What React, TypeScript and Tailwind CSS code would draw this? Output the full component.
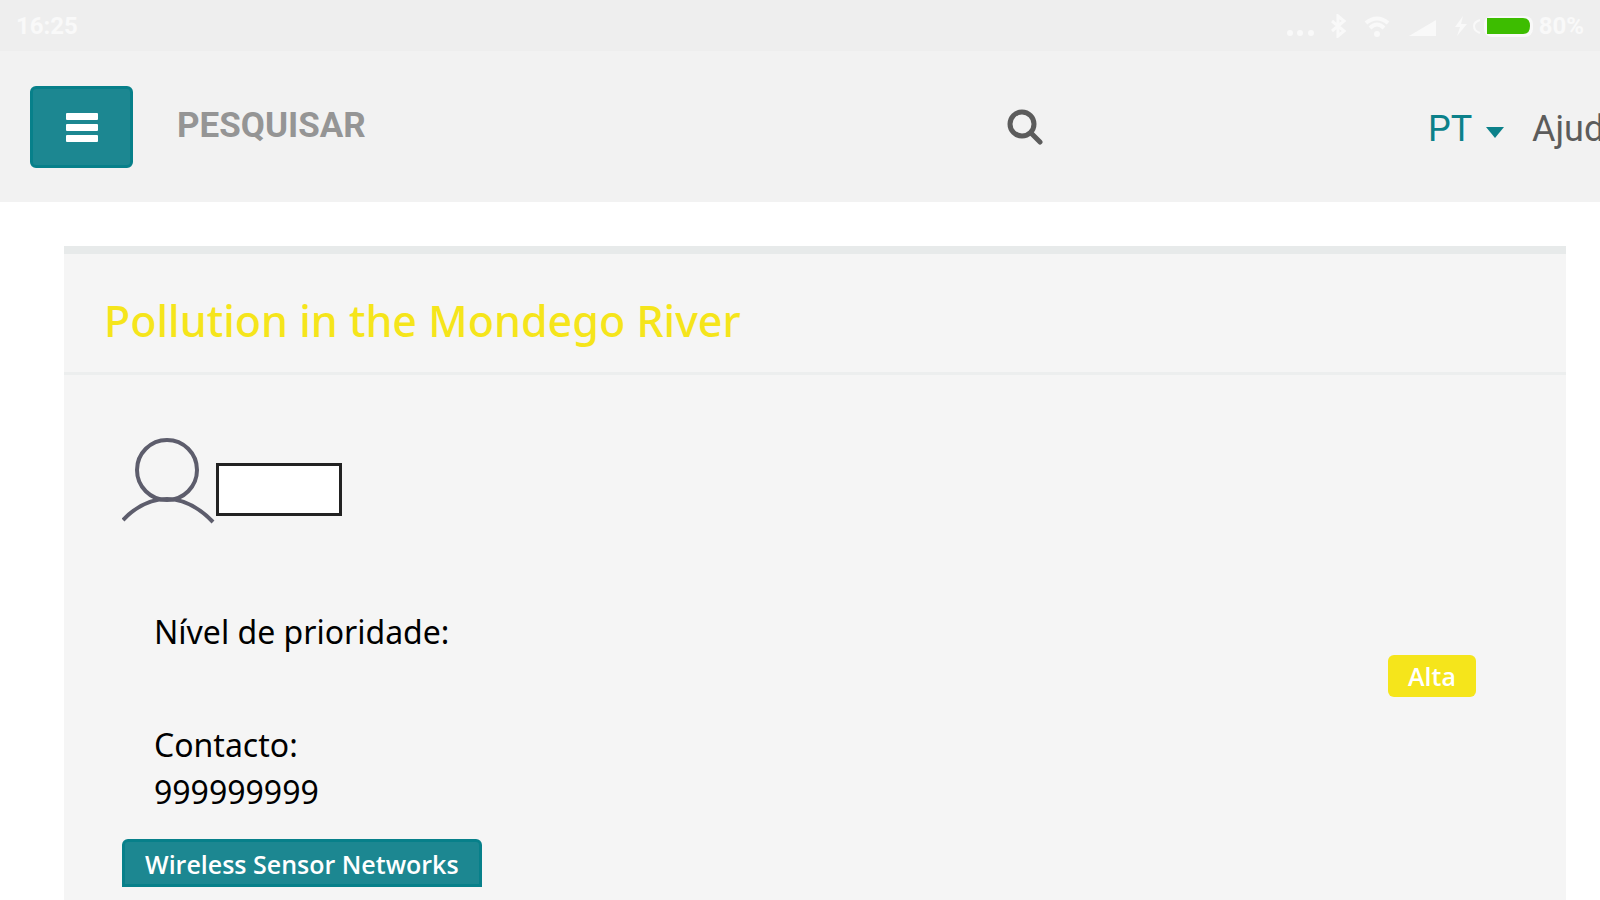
import React from "react";

function StatusBar() {
  return (
    <div className="flex h-[51px] items-center justify-between bg-[#eeeeee] pl-4 pr-4 font-[Roboto,sans-serif] text-2xl font-bold text-[#f9f9f9]">
      <time>16:25</time>
      <div className="flex items-center">
        <svg className="h-6 w-[252px]" viewBox="0 0 252 24" fill="none" stroke="#f9f9f9" aria-hidden="true">
          <g fill="#f9f9f9" stroke="none">
            <circle cx="7" cy="19" r="3" />
            <circle cx="17" cy="19" r="3" />
            <circle cx="28" cy="19" r="3" />
            <path d="M126 22L153 6V22Z" />
            <path d="M180 2L172 13H177L174 22L184 10H178Z" />
            <circle cx="94" cy="20" r="3" />
          </g>
          <path d="M49 7L61 17L55 22V2L61 7L49 17" strokeWidth="3" />
          <path d="M83 9Q94 0 105 9M87 14Q94 7 101 14" strokeWidth="4" />
          <path d="M197 6Q191 8 191 12Q191 17 197 19" strokeWidth="2" />
          <rect x="201" y="2" width="49" height="21" rx="8" fill="#f9f9f9" stroke="none" />
          <path d="M204 4H240Q247 4 247 12Q247 20 240 20H204Z" fill="#3dbd00" stroke="none" />
        </svg>
        <span className="ml-1">80%</span>
      </div>
    </div>
  );
}

function Header() {
  return (
    <header className="flex h-[151px] items-center overflow-hidden bg-[#f2f2f2] pl-[30px] font-[Roboto,sans-serif]">
      <button
        type="button"
        aria-label="Menu"
        className="flex h-[82px] w-[103px] shrink-0 items-center justify-center rounded-md border-3 border-[#07808a] bg-[#1c8791]"
      >
        <svg className="h-[30px] w-8" viewBox="0 0 32 30" fill="white" aria-hidden="true">
          <rect y="1" width="32" height="7" rx="1" />
          <rect y="12" width="32" height="7" rx="1" />
          <rect y="23" width="32" height="7" rx="1" />
        </svg>
      </button>
      <form className="ml-11 flex grow items-center" onSubmit={(e) => e.preventDefault()}>
        <input
          type="search"
          aria-label="Pesquisar"
          placeholder="PESQUISAR"
          className="w-[830px] min-w-0 bg-transparent text-[35px] font-bold text-[#666666] outline-none placeholder:text-[#959595]"
        />
        <button type="submit" aria-label="Procurar" className="shrink-0">
          <svg className="size-9" viewBox="0 0 36 36" fill="none" stroke="#5c5c5c" aria-hidden="true">
            <circle cx="15" cy="15" r="12" strokeWidth="5" />
            <path d="M24 24L33 33" strokeWidth="5" strokeLinecap="round" />
          </svg>
        </button>
      </form>
      <nav className="flex w-[172px] shrink-0 items-center pt-1 text-4xl whitespace-nowrap">
        <label className="grid shrink-0 items-center">
          <select
            aria-label="Idioma"
            className="col-start-1 row-start-1 w-[104px] appearance-none bg-transparent text-[#0c818a] outline-none"
          >
            <option>PT</option>
            <option>EN</option>
          </select>
          <svg
            className="pointer-events-none col-start-1 row-start-1 mr-7 mt-2 h-[11px] w-[18px] justify-self-end"
            viewBox="0 0 18 11"
            fill="#0c818a"
            aria-hidden="true"
          >
            <path d="M0 0H18L9 11Z" />
          </svg>
        </label>
        <a href="#ajuda" className="text-[#5c5c5c]">Ajuda</a>
      </nav>
    </header>
  );
}

export default function App() {
  return (
    <div className="flex h-screen flex-col overflow-hidden bg-white">
      <StatusBar />
      <Header />
      <main className="flex grow flex-col pl-16 pr-[34px] pt-[44px] font-['Noto_Sans',sans-serif]">
        <article className="grow border-t-8 border-[#e7eaea] bg-[#f5f5f5] text-black">
          <h1 className="border-b-3 border-[#eceeee] px-10 pb-5 pt-9 text-[43px] leading-[62px] font-medium text-[#f5e51b]">
            Pollution in the Mondego River
          </h1>
          <div className="pl-[58px] pr-[90px] pt-[62px]">
            <div className="flex items-center">
              <svg className="h-[88px] w-[94px]" viewBox="0 0 94 88" fill="none" stroke="#5d5d6c" strokeWidth="4" aria-hidden="true">
                <circle cx="45" cy="33" r="30" />
                <path d="M1 83Q21 62 45 62T91 85" />
              </svg>
              <div className="mt-4 h-[53px] w-[126px] border-3 border-[#222222] bg-white" />
            </div>
            <dl className="pl-8 pt-[83px] text-[32px] leading-[47px]">
              <dt>Nível de prioridade:</dt>
              <dd className="flex justify-end font-['Open_Sans',sans-serif]">
                <span className="flex h-[42px] w-[88px] items-center justify-center rounded-md bg-[#f5e51b] text-[25px] font-semibold text-white">
                  Alta
                </span>
              </dd>
              <dt className="pt-6">Contacto:</dt>
              <dd>999999999</dd>
            </dl>
            <a
              href="#wireless-sensor-networks"
              className="mt-6 inline-flex h-[48px] items-center rounded-t-md border-3 border-[#07808a] bg-[#1c8791] px-5 pt-1 font-['Open_Sans',sans-serif] text-[25px] font-semibold text-white"
            >
              Wireless Sensor Networks
            </a>
          </div>
        </article>
      </main>
    </div>
  );
}
